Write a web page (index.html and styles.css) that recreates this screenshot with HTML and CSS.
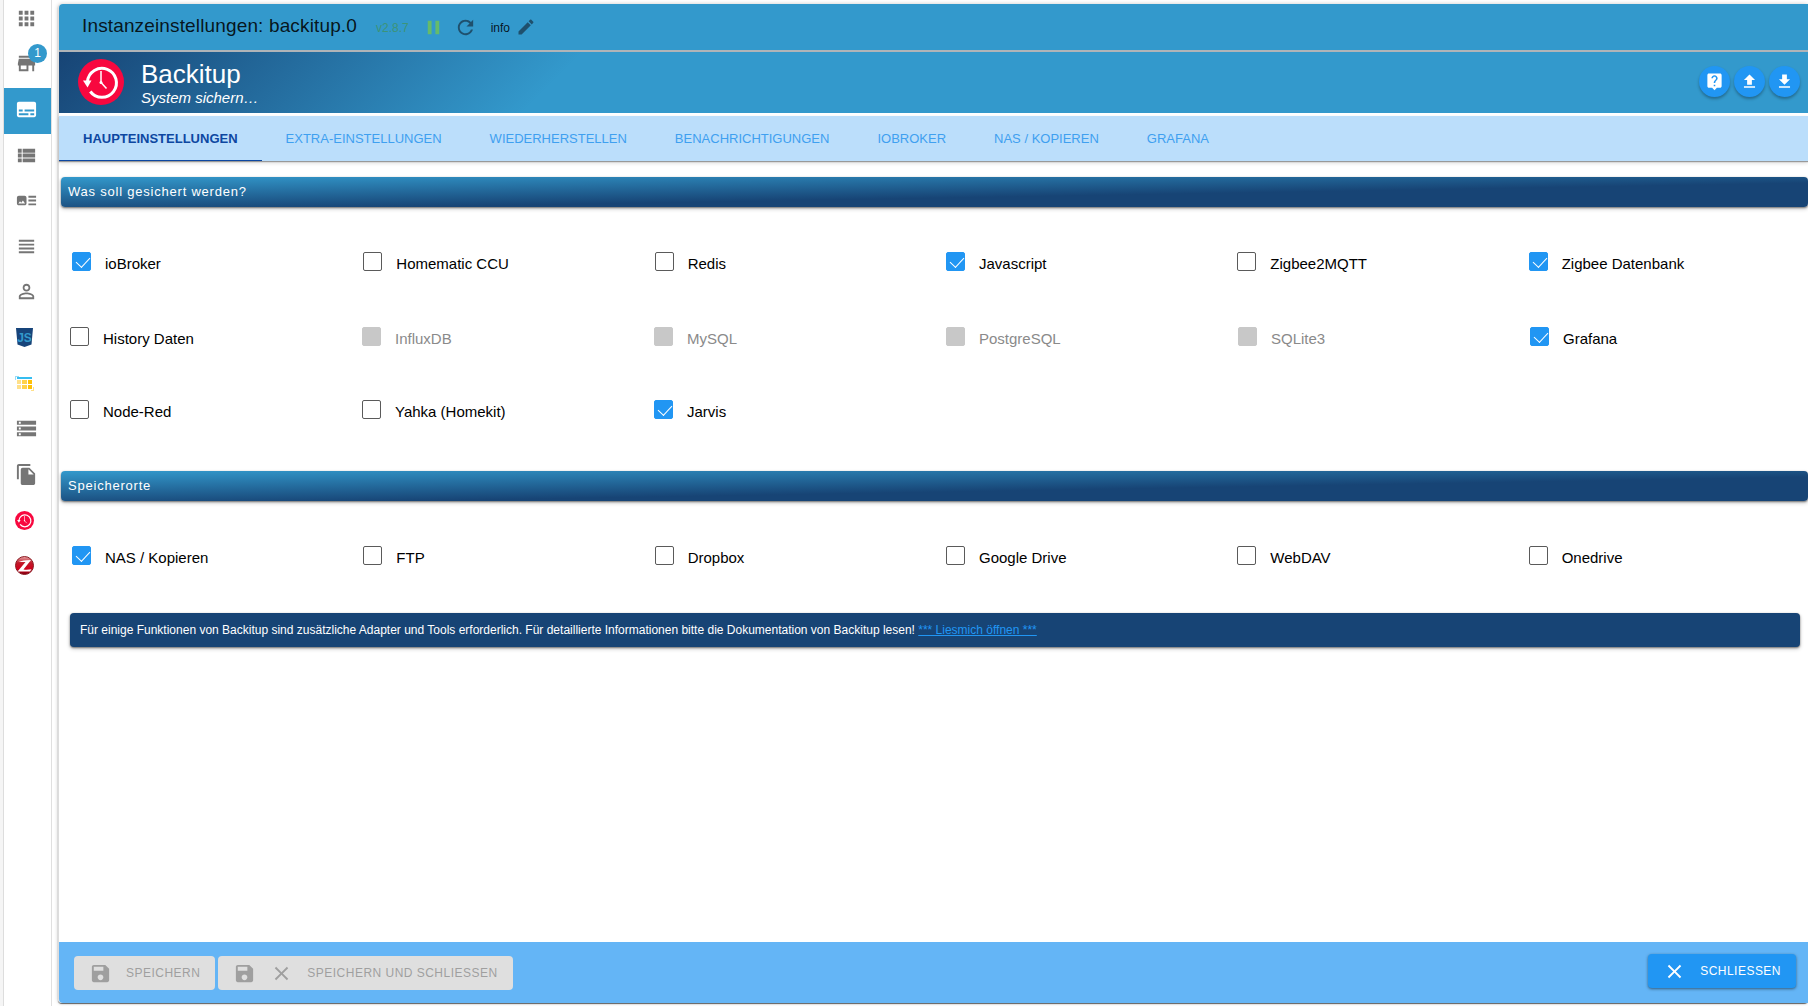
FILE: index.html
```html
<!DOCTYPE html>
<html lang="de">
<head>
<meta charset="utf-8">
<title>Instanzeinstellungen: backitup.0</title>
<meta name="viewport" content="width=device-width, initial-scale=1">
<link rel="stylesheet" href="styles.css">
</head>
<body>
<svg class="defs" aria-hidden="true">
  <symbol id="clock" viewBox="0 0 46 46">
    <circle cx="23" cy="23" r="23" fill="#f8083f"/>
    <path d="M9.500 22.500A14.500 14.500 0 1 1 12.300 32.500" fill="none" stroke="#fff" stroke-width="3"/>
    <path d="M5 21.500h8.500l-4 7z" fill="#fff"/>
    <path d="M23 12v11.500l5.500 6" fill="none" stroke="#fff" stroke-width="1.500"/>
    <circle cx="23" cy="23.500" r="1.500" fill="#fff"/>
  </symbol>
  <symbol id="save" viewBox="0 0 24 24"><path d="M17 3H5c-1.110 0-2 .9-2 2v14c0 1.100.89 2 2 2h14c1.100 0 2-.9 2-2V7l-4-4zm-5 16c-1.660 0-3-1.340-3-3s1.340-3 3-3 3 1.340 3 3-1.340 3-3 3zm3-10H5V5h10v4z"/></symbol>
  <symbol id="close" viewBox="0 0 24 24"><path d="M19 6.410L17.590 5 12 10.590 6.410 5 5 6.410 10.590 12 5 17.590 6.410 19 12 13.410 17.590 19 19 17.590 13.410 12z"/></symbol>
</svg>

<nav class="sidebar" aria-label="Navigation">
  <a class="item" href="#apps"><svg class="icon" viewBox="0 0 24 24"><path d="M4 8h4V4H4v4zm6 12h4v-4h-4v4zm-6 0h4v-4H4v4zm0-6h4v-4H4v4zm6 0h4v-4h-4v4zm6-10v4h4V4h-4zm-6 4h4V4h-4v4zm6 6h4v-4h-4v4zm0 6h4v-4h-4v4z"/></svg></a>
  <a class="item" href="#adapter"><svg class="icon" viewBox="0 0 24 24"><path d="M20 4H4v2h16V4zm1 10v-2l-1-5H4l-1 5v2h1v6h10v-6h4v6h2v-6h1zm-9 4H6v-4h6v4z"/></svg><span class="badge">1</span></a>
  <a class="item active" href="#instanzen"><svg class="icon" viewBox="0 0 24 24"><path d="M20 4H4c-1.100 0-2 .9-2 2v12c0 1.100.9 2 2 2h16c1.100 0 2-.9 2-2V6c0-1.100-.9-2-2-2zM4 12h4v2H4v-2zm10 6H4v-2h10v2zm6 0h-4v-2h4v2zm0-4H10v-2h10v2z"/></svg></a>
  <a class="item" href="#objekte"><svg class="icon" viewBox="0 0 24 24"><path d="M3 14h4v-4H3v4zm0 5h4v-4H3v4zM3 9h4V5H3v4zm5 5h13v-4H8v4zm0 5h13v-4H8v4zM8 5v4h13V5H8z"/></svg></a>
  <a class="item" href="#kategorien"><svg class="icon" viewBox="0 0 24 24"><path d="M22 13h-8v-2h8v2zm0-6h-8v2h8V7zm-8 10h8v-2h-8v2zm-2-8v6c0 1.100-.9 2-2 2H4c-1.100 0-2-.9-2-2V9c0-1.100.9-2 2-2h6c1.100 0 2 .9 2 2zm-1.500 6l-2.250-3-1.750 2.260-1.250-1.510L3.500 15h7z"/></svg></a>
  <a class="item" href="#log"><svg class="icon" viewBox="0 0 24 24"><path d="M4 15h16v-2H4v2zm0 4h16v-2H4v2zm0-8h16V9H4v2zm0-6v2h16V5H4z"/></svg></a>
  <a class="item" href="#benutzer"><svg class="icon" viewBox="0 0 24 24"><path d="M12 5.900c1.160 0 2.100.94 2.100 2.100s-.94 2.100-2.100 2.100S9.900 9.160 9.900 8s.94-2.100 2.100-2.100m0 9c2.970 0 6.100 1.460 6.100 2.100v1.100H5.900V17c0-.64 3.130-2.100 6.100-2.100M12 4C9.790 4 8 5.790 8 8s1.790 4 4 4 4-1.790 4-4-1.790-4-4-4zm0 9c-2.670 0-8 1.340-8 4v3h16v-3c0-2.660-5.330-4-8-4z"/></svg></a>
  <a class="item" href="#skripte"><svg class="logo" viewBox="0 0 19 19"><path d="M1 0h17l-1.500 16.500L9.500 19l-7-2.500z" fill="#17447a"/><text class="logo-text" x="9.500" y="14" text-anchor="middle" fill="#3399cc">JS</text></svg></a>
  <a class="item" href="#zeitplan"><svg class="logo" viewBox="0 0 19 19"><path d="M0 2h1v4H0zM0 2h4v1H0z" fill="#9bdcf5"/><path d="M2 3h15v2H2z" fill="#35bdf0"/><path d="M2 6h4v4H2zM2 11h4v4H2z" fill="#ffe08a"/><path d="M7 6h5v4H7zM7 11h5v4H7z" fill="#ffd24a"/><path d="M13 6h4v4h-4zM13 11h4v4h-4z" fill="#ffc107"/><path d="M18 13h1v4h-3v-1h2z" fill="#ffe08a"/></svg></a>
  <a class="item" href="#hosts"><svg class="icon" viewBox="0 0 24 24"><path d="M2 20h20v-4H2v4zm2-3h2v2H4v-2zM2 4v4h20V4H2zm4 3H4V5h2v2zm-4 7h20v-4H2v4zm2-3h2v2H4v-2z"/></svg></a>
  <a class="item" href="#dateien"><svg class="icon" viewBox="0 0 24 24"><path d="M16 1H4c-1.100 0-2 .9-2 2v14h2V3h12V1zm-1 4l6 6v10c0 1.100-.9 2-2 2H7.990C6.890 23 6 22.100 6 21l.01-14c0-1.100.89-2 1.990-2h7zm-1 7h5.500L14 6.500V12z"/></svg></a>
  <a class="item" href="#backitup"><svg class="logo"><use href="#clock"/></svg></a>
  <a class="item" href="#zigbee"><svg class="logo" viewBox="0 0 19 19"><defs><linearGradient id="ball" x1="0" y1="0" x2="0" y2="1"><stop offset="0" stop-color="#e9a9a9"/><stop offset=".35" stop-color="#c01a2a"/><stop offset=".7" stop-color="#d2001c"/><stop offset="1" stop-color="#7d0010"/></linearGradient></defs><circle cx="9.500" cy="9.500" r="9" fill="url(#ball)" stroke="#8a1a22"/><path d="M3.500 6q4-2 12.500-2L8.500 13.500q4 .5 8-.3l-1.500 2.300H2.500L10.500 6z" fill="#fff"/></svg></a>
</nav>

<main class="card">
  <header class="toolbar">
    <h1 class="title">Instanzeinstellungen: backitup.0</h1>
    <span class="version">v2.8.7</span>
    <button class="tool pause" aria-label="Pause"><svg class="icon" viewBox="0 0 24 24"><path d="M6 19h4V5H6v14zm8-14v14h4V5h-4z"/></svg></button>
    <button class="tool refresh" aria-label="Neu starten"><svg class="icon" viewBox="0 0 24 24"><path d="M17.650 6.350C16.200 4.900 14.210 4 12 4c-4.420 0-7.990 3.580-7.990 8s3.570 8 7.990 8c3.730 0 6.840-2.550 7.730-6h-2.080c-.82 2.330-3.040 4-5.650 4-3.310 0-6-2.690-6-6s2.690-6 6-6c1.660 0 3.140.69 4.220 1.780L13 11h7V4l-2.350 2.350z"/></svg></button>
    <span class="level">info</span>
    <button class="tool edit" aria-label="Loglevel ändern"><svg class="icon-edit" viewBox="0 0 24 24"><path d="M3 17.250V21h3.750L17.810 9.940l-3.750-3.750L3 17.250zM20.710 7.040c.39-.39.39-1.020 0-1.410l-2.340-2.340c-.39-.39-1.020-.39-1.410 0l-1.830 1.830 3.750 3.750 1.830-1.830z"/></svg></button>
  </header>

  <section class="hero">
    <svg class="hero-logo" aria-hidden="true"><use href="#clock"/></svg>
    <div class="hero-text">
      <h2 class="hero-title">Backitup</h2>
      <p class="hero-sub">System sichern…</p>
    </div>
    <div class="actions">
      <button class="round" aria-label="Hilfe"><svg class="icon-small" viewBox="0 0 24 24"><path d="M19 2H5c-1.110 0-2 .9-2 2v14c0 1.100.89 2 2 2h4l3 3 3-3h4c1.100 0 2-.9 2-2V4c0-1.100-.9-2-2-2zm-6 16h-2v-2h2v2zm2.070-7.750l-.9.920C13.450 11.900 13 12.500 13 14h-2v-.5c0-1.100.45-2.100 1.170-2.830l1.240-1.260c.37-.36.59-.86.59-1.410 0-1.100-.9-2-2-2s-2 .9-2 2H8c0-2.210 1.790-4 4-4s4 1.790 4 4c0 .88-.36 1.680-.93 2.250z"/></svg></button>
      <button class="round" aria-label="Einstellungen laden"><svg class="icon-small" viewBox="0 0 24 24"><path d="M9 16h6v-6h4l-7-7-7 7h4zm-4 2h14v2H5z"/></svg></button>
      <button class="round" aria-label="Einstellungen speichern"><svg class="icon-small" viewBox="0 0 24 24"><path d="M19 9h-4V3H9v6H5l7 7 7-7zM5 18v2h14v-2H5z"/></svg></button>
    </div>
  </section>

  <nav class="tabs" aria-label="Einstellungen">
    <a class="tab current" href="#main">HAUPTEINSTELLUNGEN</a>
    <a class="tab" href="#extra">EXTRA-EINSTELLUNGEN</a>
    <a class="tab" href="#restore">WIEDERHERSTELLEN</a>
    <a class="tab" href="#notify">BENACHRICHTIGUNGEN</a>
    <a class="tab" href="#iobroker">IOBROKER</a>
    <a class="tab" href="#nas">NAS / KOPIEREN</a>
    <a class="tab" href="#grafana">GRAFANA</a>
  </nav>

  <div class="content">
    <h3 class="section-title">Was soll gesichert werden?</h3>
    <div class="options inset">
      <label class="option"><input type="checkbox" checked><span>ioBroker</span></label>
      <label class="option"><input type="checkbox"><span>Homematic CCU</span></label>
      <label class="option"><input type="checkbox"><span>Redis</span></label>
      <label class="option"><input type="checkbox" checked><span>Javascript</span></label>
      <label class="option"><input type="checkbox"><span>Zigbee2MQTT</span></label>
      <label class="option"><input type="checkbox" checked><span>Zigbee Datenbank</span></label>
    </div>
    <div class="options">
      <label class="option"><input type="checkbox"><span>History Daten</span></label>
      <label class="option"><input type="checkbox" disabled><span>InfluxDB</span></label>
      <label class="option"><input type="checkbox" disabled><span>MySQL</span></label>
      <label class="option"><input type="checkbox" disabled><span>PostgreSQL</span></label>
      <label class="option"><input type="checkbox" disabled><span>SQLite3</span></label>
      <label class="option"><input type="checkbox" checked><span>Grafana</span></label>
      <label class="option"><input type="checkbox"><span>Node-Red</span></label>
      <label class="option"><input type="checkbox"><span>Yahka (Homekit)</span></label>
      <label class="option"><input type="checkbox" checked><span>Jarvis</span></label>
    </div>

    <h3 class="section-title">Speicherorte</h3>
    <div class="options inset">
      <label class="option"><input type="checkbox" checked><span>NAS / Kopieren</span></label>
      <label class="option"><input type="checkbox"><span>FTP</span></label>
      <label class="option"><input type="checkbox"><span>Dropbox</span></label>
      <label class="option"><input type="checkbox"><span>Google Drive</span></label>
      <label class="option"><input type="checkbox"><span>WebDAV</span></label>
      <label class="option"><input type="checkbox"><span>Onedrive</span></label>
    </div>

    <p class="note">Für einige Funktionen von Backitup sind zusätzliche Adapter und Tools erforderlich. Für detaillierte Informationen bitte die Dokumentation von Backitup lesen! <a class="note-link" href="#readme">*** Liesmich öffnen ***</a></p>
  </div>

  <footer class="footer">
    <div class="save-group">
      <button class="btn" disabled><svg class="icon"><use href="#save"/></svg>SPEICHERN</button>
      <button class="btn" disabled><svg class="icon"><use href="#save"/></svg><svg class="icon"><use href="#close"/></svg>SPEICHERN UND SCHLIESSEN</button>
    </div>
    <button class="btn primary"><svg class="icon"><use href="#close"/></svg>SCHLIESSEN</button>
  </footer>
</main>
</body>
</html>
```
FILE: styles.css
```css
* { box-sizing: border-box; }

body {
  margin: 0;
  min-height: 100vh;
  display: flex;
  overflow: hidden;
  background: #fff;
  color: #000;
  font-family: "Liberation Sans", Arial, sans-serif;
  font-size: 15px;
}

h1, h2, h3, p { margin: 0; font-weight: 400; }
button { font-family: inherit; border: 0; padding: 0; background: none; cursor: pointer; }
button:disabled { cursor: default; }
svg { display: block; flex: none; fill: currentColor; }

.defs { position: absolute; width: 0; height: 0; }
.icon { width: 23px; height: 23px; }
.icon-small { width: 19px; height: 19px; }
.icon-edit { width: 20px; height: 20px; }
.logo { width: 19px; height: 19px; }
.logo-text { font-size: 12px; font-weight: 700; }

/* Sidebar */
.sidebar {
  flex: none;
  width: 49px;
  display: grid;
  grid-template-rows: repeat(13, calc(593px / 13));
  align-content: start;
  margin: -3px 0 0 3px;
  border-left: 1px solid #ddd;
  border-right: 1px solid #e0e0e0;
  box-shadow: -3px 0 #f5f5f5;
}
.item {
  position: relative;
  display: flex;
  align-items: center;
  padding: 0 0 3px 11px;
  color: #757575;
}
.item.active { background: #3399cc; color: #fff; }
.badge {
  position: absolute;
  left: 24px;
  top: 1px;
  width: 19px;
  height: 19px;
  border-radius: 50%;
  background: #3399cc;
  color: #fff;
  font-size: 12px;
  line-height: 19px;
  text-align: center;
}

/* Card */
.card {
  flex: 1;
  min-width: 0;
  display: flex;
  flex-direction: column;
  margin: 4px 0 3px 6px;
  border-left: 1px solid #ddd;
  border-radius: 4px;
  box-shadow: 0 1px 1px #616161, 0 0 4px #ccc;
}
.toolbar {
  display: flex;
  align-items: center;
  height: 48px;
  padding: 0 23px;
  border-bottom: 2px solid #b0b4b8;
  border-top-left-radius: 4px;
  background: #3399cc;
}
.title {
  font-size: 19px;
  line-height: 24px;
  padding-bottom: 2px;
  letter-spacing: .0075em;
  color: rgba(0, 0, 0, .87);
}
.version, .level { font-size: 12px; line-height: 16px; padding-top: 2px; }
.version { margin-left: 19px; color: #3c9478; }
.level { margin-left: 14px; color: rgba(0, 0, 0, .87); }
.tool { color: #1f506d; }
.pause { margin-left: 13px; color: #66bb6a; }
.refresh { margin-left: 9px; }
.edit { margin-left: 6px; }

/* Adapter header */
.hero {
  display: flex;
  align-items: center;
  height: 61px;
  padding: 0 8px 2px 19px;
  background: linear-gradient(135deg, #174475, #3399cc 29%);
  color: #fff;
}
.hero-logo { width: 46px; height: 46px; }
.hero-text { margin-left: 17px; padding-top: 2px; }
.hero-title { font-size: 26px; line-height: 30px; }
.hero-sub { font-size: 15px; line-height: 17px; font-style: italic; }
.actions { display: flex; gap: 4px; margin-left: auto; }
.round {
  display: grid;
  place-items: center;
  width: 31px;
  height: 31px;
  border-radius: 50%;
  background: #2196f3;
  color: #fff;
  box-shadow: 0 2px 3px rgba(0, 0, 0, .3);
}

/* Tabs */
.tabs {
  display: flex;
  height: 45px;
  margin-top: 3px;
  background: #bbdefb;
  box-shadow: 0 1px 1px #999, 0 2px 4px rgba(0, 0, 0, .15);
}
.tab {
  padding: 0 24px;
  font-size: 13px;
  line-height: 45px;
  color: #3fa0f0;
  text-decoration: none;
  white-space: nowrap;
}
.tab.current { font-weight: 700; color: #0d47a1; box-shadow: inset 0 -1px #0d47a1; }

/* Settings */
.content { flex: 1; padding-top: 16px; }
.section-title {
  margin-left: 2px;
  padding-left: 7px;
  font-size: 13px;
  line-height: 30px;
  letter-spacing: .06em;
  color: #fff;
  border-radius: 4px;
  background: linear-gradient(to bottom right, #3399cc, #174475 60%);
  box-shadow: 0 1px 2px #777, 0 2px 4px rgba(0, 0, 0, .2);
}
.options {
  display: grid;
  grid-template-columns: repeat(6, 1fr);
  row-gap: 52px;
  margin: 54px -3px 50px 0;
}
.options.inset { margin: 45px -1px 0 2px; }
.option {
  display: flex;
  align-items: flex-start;
  gap: 14px;
  padding-left: 11px;
  font-size: 15px;
  line-height: 19px;
}
.option span { padding-top: 2px; }
.option input {
  appearance: none;
  position: relative;
  flex: none;
  width: 19px;
  height: 19px;
  margin: 0;
  border: 1px solid #5a5a5a;
  border-radius: 2px;
}
.option input:checked { border-color: #2196f3; background: #2196f3; }
.option input:checked::after {
  content: "";
  position: absolute;
  left: 6px;
  top: 1px;
  width: 7px;
  height: 12px;
  border: solid #fff;
  border-width: 0 1px 1px 0;
  transform: rotate(43deg);
}
.option input:disabled { border-color: #c8c8c8; background: #c8c8c8; }
.option input:disabled + span { color: #8a8a8a; }

.note {
  margin: 46px 8px 0 11px;
  padding: 9px 10px;
  border-radius: 4px;
  background: #174475;
  color: #fff;
  font-size: 12px;
  line-height: 16px;
  box-shadow: 0 1px 2px #777, 0 2px 4px rgba(0, 0, 0, .2);
}
.note-link { color: #2196f3; }

/* Footer */
.footer {
  display: flex;
  align-items: flex-start;
  justify-content: space-between;
  height: 61px;
  padding: 12px 12px 0 15px;
  border-bottom-left-radius: 4px;
  background: #64b5f6;
}
.save-group { display: flex; gap: 3px; padding-top: 2px; }
.btn {
  display: flex;
  align-items: center;
  gap: 14px;
  height: 34px;
  padding: 0 15px;
  border-radius: 4px;
  font-size: 12px;
  letter-spacing: .04em;
  background: #dfdfdf;
  color: #9f9f9f;
}
.primary {
  background: #2196f3;
  color: #fff;
  box-shadow: 0 1px 3px rgba(0, 0, 0, .5);
}
```
